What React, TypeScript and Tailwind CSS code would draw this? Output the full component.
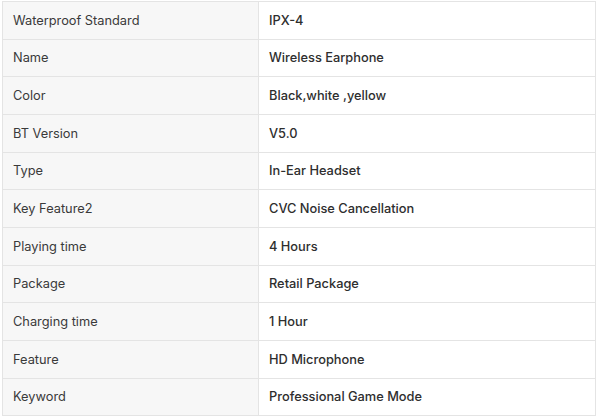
const rows: [string, string][] = [
  ['Waterproof Standard', 'IPX-4'],
  ['Name', 'Wireless Earphone'],
  ['Color', 'Black,white ,yellow'],
  ['BT Version', 'V5.0'],
  ['Type', 'In-Ear Headset'],
  ['Key Feature2', 'CVC Noise Cancellation'],
  ['Playing time', '4 Hours'],
  ['Package', 'Retail Package'],
  ['Charging time', '1 Hour'],
  ['Feature', 'HD Microphone'],
  ['Keyword', 'Professional Game Mode'],
];

export default function App() {
  return (
    <div className="w-[600px] h-[418px] bg-white pl-[2px] pr-[4px] pt-px font-['Inter',sans-serif] text-[12.8px]">
      <table className="w-full border-collapse border border-[#e4e4e4]">
        <tbody>
          {rows.map(([label, value]) => (
            <tr key={label} className="h-[37.67px] border-b border-[#e4e4e4]">
              <td className="w-[256px] bg-[#f7f7f7] border-r border-[#e4e4e4] px-[10px] text-[#3a3a3a]">
                {label}
              </td>
              <td className="px-[10px] font-medium text-[#2e2e2e]">{value}</td>
            </tr>
          ))}
        </tbody>
      </table>
    </div>
  );
}
